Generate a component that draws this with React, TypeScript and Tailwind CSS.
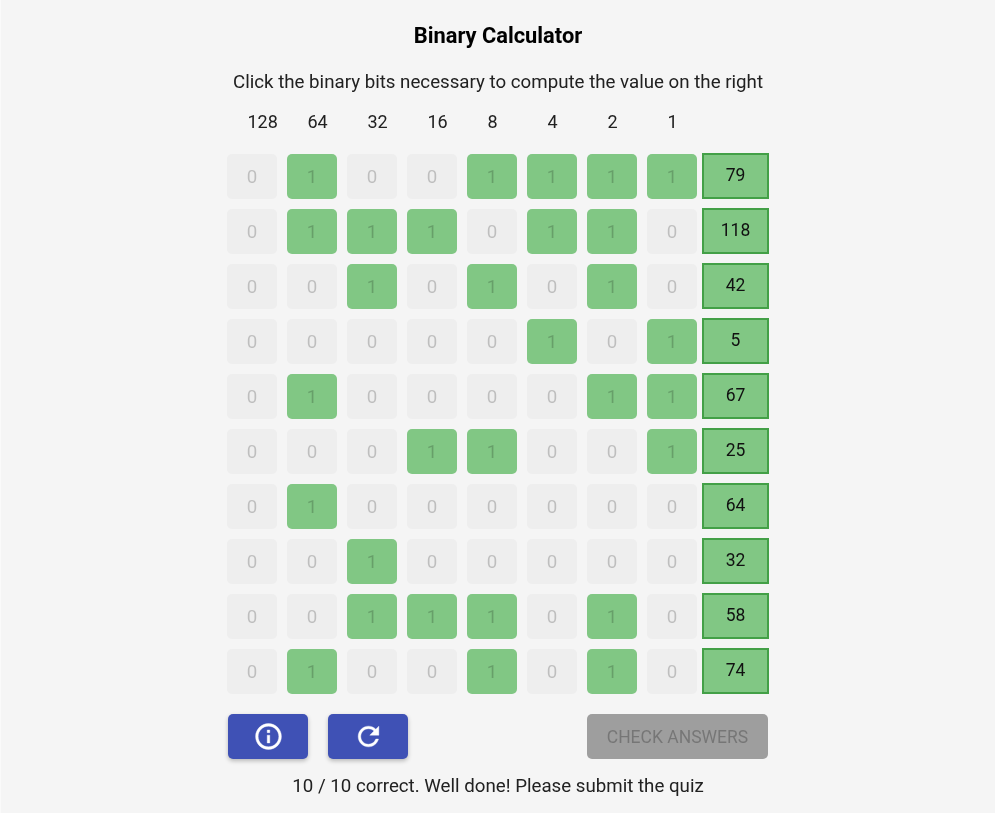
const rows: { bits: string; value: number }[] = [
  { bits: "01001111", value: 79 },
  { bits: "01110110", value: 118 },
  { bits: "00101010", value: 42 },
  { bits: "00000101", value: 5 },
  { bits: "01000011", value: 67 },
  { bits: "00011001", value: 25 },
  { bits: "01000000", value: 64 },
  { bits: "00100000", value: 32 },
  { bits: "00111010", value: 58 },
  { bits: "01001010", value: 74 },
];

const headers = [128, 64, 32, 16, 8, 4, 2, 1];

export default function App() {
  return (
    <div className="min-h-[813px] bg-[#f5f5f5] border-l border-[#fafafa] font-['Roboto',sans-serif] text-[#212121]">
      <div className="mx-auto w-[542px] flex flex-col items-stretch will-change-transform">
        <h1 className="mt-[23px] text-center text-[21.84px] leading-[25px] font-bold text-black">Binary Calculator</h1>
        <p className="mt-[22px] text-center text-[18.72px] leading-[24px] whitespace-nowrap">
          Click the binary bits necessary to compute the value on the right
        </p>
        <div className="mt-[16px] flex text-[18px] leading-[24px]">
          {headers.map((h) => (
            <div key={h} className="w-[60px] pl-[20.5px]">{h}</div>
          ))}
        </div>
        <div className="mt-[19px] flex flex-col gap-[9px]">
          {rows.map((r) => (
            <div key={r.value} className="flex items-end h-[46px]">
              <div className="flex gap-[10px]">
                {r.bits.split("").map((b, i) => (
                  <div
                    key={i}
                    className={`w-[50px] h-[45px] rounded-[5px] flex items-center justify-center pt-[1px] text-[18.72px] text-black/20 ${b === "1" ? "bg-[#81c784]" : "bg-[#eeeeee]"}`}
                  >
                    {b}
                  </div>
                ))}
              </div>
              <div className="ml-[5px] w-[67px] h-[46px] border-2 border-[#43a047] bg-[#81c784] flex items-center justify-center text-[17.5px] pb-[1px] text-[#111]">
                {r.value}
              </div>
            </div>
          ))}
        </div>
        <div className="mt-[20px] flex items-center pl-px pr-px">
          <button className="w-[80px] h-[45px] rounded-[5px] bg-[#3f51b5] flex items-center justify-center shadow-[0_2px_4px_rgba(0,0,0,0.25)]">
            <svg width="31" height="31" viewBox="0 0 24 24" fill="white" stroke="white" strokeWidth="0.3">
              <path d="M11 7h2v2h-2zm0 4h2v6h-2zm1-9C6.48 2 2 6.48 2 12s4.48 10 10 10 10-4.48 10-10S17.52 2 12 2zm0 18c-4.41 0-8-3.59-8-8s3.59-8 8-8 8 3.59 8 8-3.59 8-8 8z" />
            </svg>
          </button>
          <button className="ml-[20px] w-[80px] h-[45px] rounded-[5px] bg-[#3f51b5] flex items-center justify-center shadow-[0_2px_4px_rgba(0,0,0,0.25)]">
            <svg width="31" height="31" viewBox="0 0 24 24" fill="white" stroke="white" strokeWidth="0.3">
              <path d="M17.65 6.35C16.2 4.9 14.21 4 12 4c-4.42 0-7.99 3.58-7.99 8s3.57 8 7.99 8c3.73 0 6.84-2.55 7.73-6h-2.08c-.82 2.33-3.04 4-5.65 4-3.31 0-6-2.69-6-6s2.69-6 6-6c1.66 0 3.14.69 4.22 1.78L13 11h7V4l-2.35 2.35z" />
            </svg>
          </button>
          <button className="ml-auto w-[181px] h-[45px] rounded-[5px] bg-[#9e9e9e] pt-[1px] text-[17.5px] text-black/25">
            CHECK ANSWERS
          </button>
        </div>
        <p className="mt-[15px] text-center text-[18.72px] leading-[24px]">10 / 10 correct. Well done! Please submit the quiz</p>
      </div>
    </div>
  );
}
